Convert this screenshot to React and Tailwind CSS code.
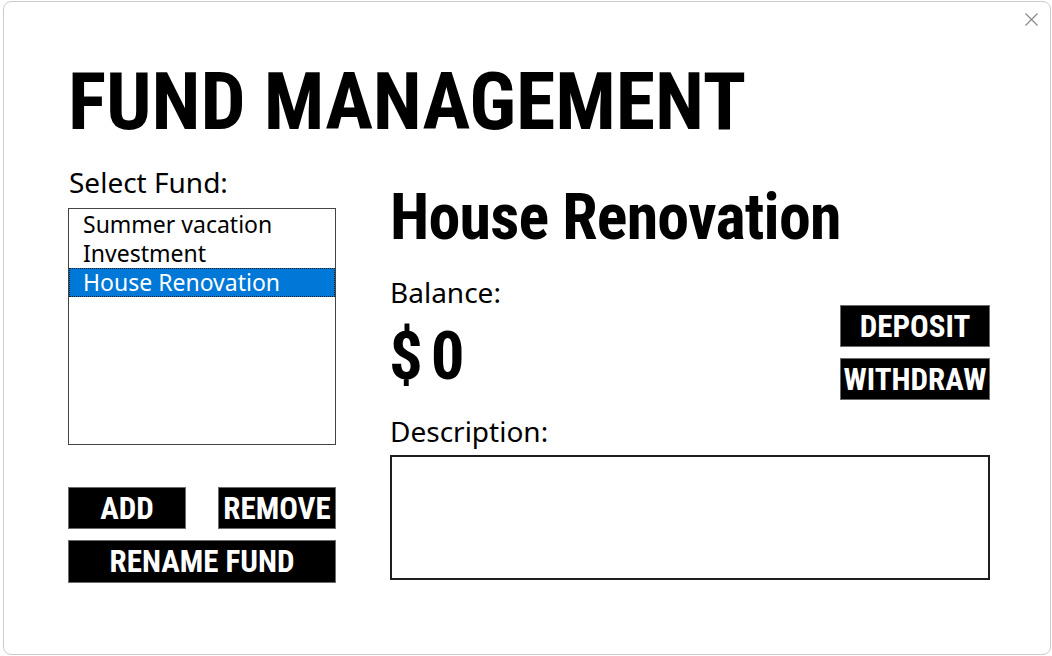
const cond = { fontFamily: '"Roboto Condensed", "DejaVu Sans Condensed", sans-serif' };

function BlackButton({ children, className }) {
  return (
    <button
      className={
        'flex items-center justify-center bg-black border border-[#6b6b6b] text-white font-bold text-[31px] leading-none ' +
        className
      }
      style={cond}
    >
      {children}
    </button>
  );
}

export default function App() {
  const funds = ['Summer vacation', 'Investment', 'House Renovation'];
  const selected = 2;
  return (
    <div className="w-[1052px] h-[656px] bg-white overflow-hidden" style={{ fontFamily: '"Noto Sans", sans-serif' }}>
      <div className="ml-[3px] mt-[1px] w-[1048px] h-[654px] border border-[#cccccc] rounded-[8px] flex flex-col">
        <div className="flex justify-end pr-[12px] pt-[11px]">
          <svg width="13" height="13" viewBox="0 0 13 13" className="block">
            <path d="M0.5 0.5 L12.5 12.5 M12.5 0.5 L0.5 12.5" stroke="#8a8a8a" strokeWidth="1.2" fill="none" />
          </svg>
        </div>
        <div className="pl-[64px] flex flex-col">
          <h1 className="mt-[36px] text-[80px] leading-[80px] h-[80px] font-bold text-black whitespace-nowrap tracking-[-0.1px]" style={cond}>
            FUND MANAGEMENT
          </h1>
          <div className="flex items-start gap-[54px]">
            {/* Left column */}
            <div className="w-[268px] flex flex-col mt-[26px]">
              <div className="text-[28px] leading-[28px] h-[27px] text-black whitespace-nowrap ml-[1px]">Select Fund:</div>
              <div className="mt-[13px] h-[237px] border border-[#444444] pt-[1px] bg-white">
                {funds.map((f, i) => (
                  <div
                    key={f}
                    className={
                      'h-[29px] leading-[29px] pl-[14px] text-[23px] whitespace-nowrap ' +
                      (i === selected
                        ? 'bg-[#0078d7] text-white outline outline-1 outline-dotted outline-[#1a1a1a] -outline-offset-1'
                        : 'text-black')
                    }
                  >
                    {f}
                  </div>
                ))}
              </div>
              <div className="mt-[42px] flex justify-between">
                <BlackButton className="w-[118px] h-[42px]">ADD</BlackButton>
                <BlackButton className="w-[118px] h-[42px]">REMOVE</BlackButton>
              </div>
              <BlackButton className="mt-[11px] w-[268px] h-[43px]">RENAME FUND</BlackButton>
            </div>
            {/* Right column */}
            <div className="w-[600px] flex flex-col mt-[44px]">
              <h2 className="text-[64px] leading-[64px] h-[64px] font-bold text-black whitespace-nowrap tracking-[-0.8px]" style={cond}>
                House Renovation
              </h2>
              <div className="mt-[28px] flex items-start justify-between">
                <div className="flex flex-col">
                  <div className="text-[28px] leading-[28px] h-[27px] text-black">Balance:</div>
                  <div className="mt-[18px] text-[67px] leading-[67px] h-[67px] font-bold text-black tracking-[8px] -ml-[1px]" style={cond}>
                    $0
                  </div>
                </div>
                <div className="flex flex-col pt-[27px] gap-[11px]">
                  <BlackButton className="w-[150px] h-[42px]">DEPOSIT</BlackButton>
                  <BlackButton className="w-[150px] h-[42px]">WITHDRAW</BlackButton>
                </div>
              </div>
              <div className="mt-[17px] text-[28px] leading-[28px] h-[27px] text-black">Description:</div>
              <div className="mt-[11px] h-[125px] border-2 border-[#1e1e1e] bg-white"></div>
            </div>
          </div>
        </div>
      </div>
    </div>
  );
}
